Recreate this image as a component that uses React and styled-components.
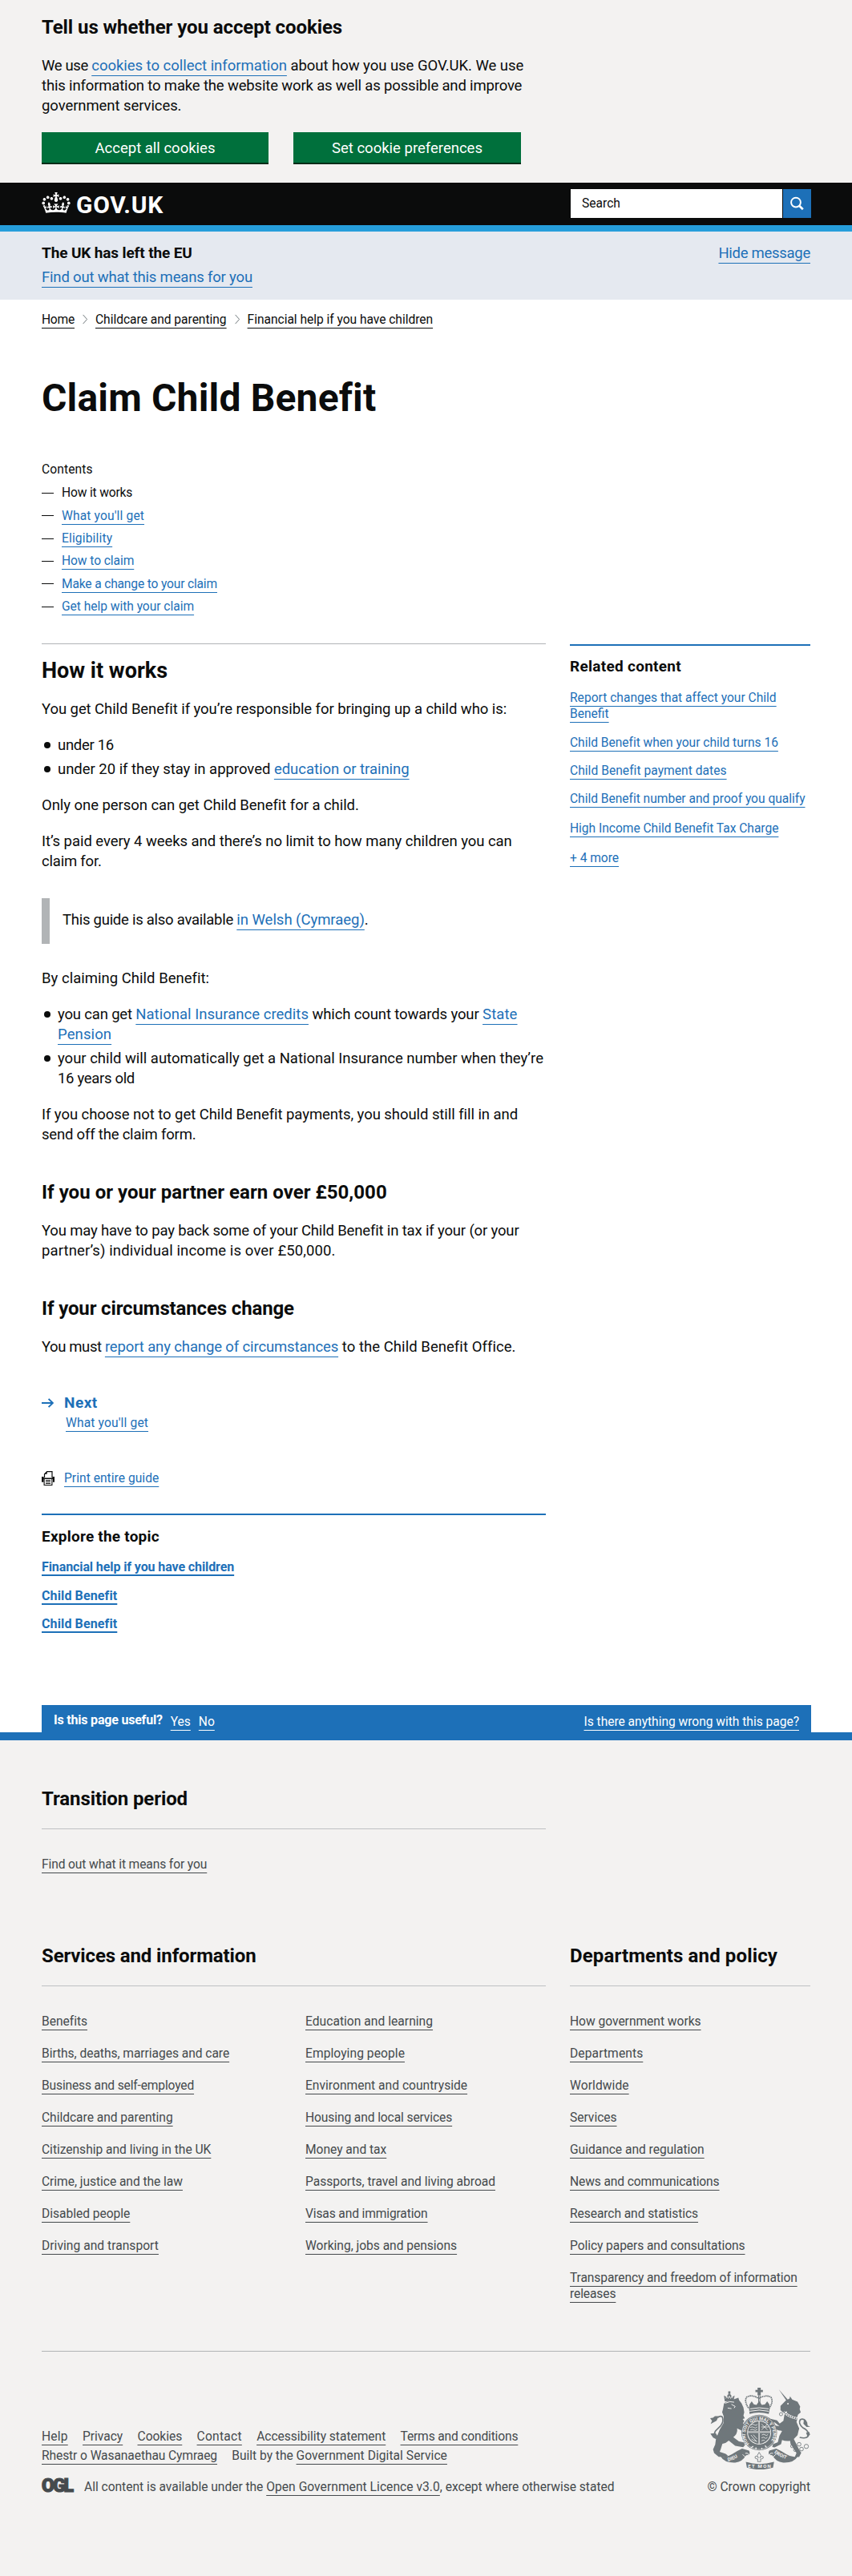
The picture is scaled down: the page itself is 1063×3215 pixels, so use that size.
import React from 'react';
import styled, { createGlobalStyle } from 'styled-components';

const blue = '#1d70b8';
const ink = '#0b0c0c';
const footerInk = '#454a4d';

const Global = createGlobalStyle`
  * { box-sizing: border-box; }
  html { background: #f3f2f1; }
  body { margin: 0; font-family: Roboto, "Liberation Sans", Arial, sans-serif; color: ${ink}; background: #fff; }
  h1, h2, h3, p, ul { margin: 0; padding: 0; }
  ul { list-style: none; }
`;

const Container = styled.div`padding: 0 52px;`;

const Text = styled.p`
  font-size: 18.5px;
  line-height: 25px;
  letter-spacing: ${p => p.$ls ?? -0.03}px;
  margin-top: ${p => p.$mt ?? 20}px;
`;
const Run = styled.span`letter-spacing: ${p => p.$ls}px;`;
const Link = styled.a`
  color: ${blue};
  cursor: pointer;
  letter-spacing: ${p => (p.$ls === undefined ? 'inherit' : `${p.$ls}px`)};
  text-decoration: underline;
  text-decoration-thickness: 1px;
  text-underline-offset: 6px;
  text-decoration-skip-ink: none;
`;
const SmallLink = styled(Link)`
  font-size: 15.6px;
  line-height: 20px;
  letter-spacing: ${p => p.$ls ?? -0.03}px;
  text-underline-offset: 5px;
`;
const Heading = styled.h2`
  font-size: ${p => p.$size ?? 24}px;
  line-height: ${p => p.$lh ?? 30}px;
  font-weight: 700;
  letter-spacing: ${p => p.$ls ?? 0}px;
  margin-top: ${p => p.$mt ?? 0}px;
`;

const CookieBanner = styled.section`background: #f3f2f1; padding: 19px 52px 25px;`;
const CookieText = styled(Text)`width: 614px;`;
const Buttons = styled.div`display: flex; gap: 31px; margin-top: 20px;`;
const Button = styled.button`
  width: ${p => p.$w}px;
  height: 38px;
  border: 0;
  padding: 3px 0 0;
  background: #00703c;
  box-shadow: 0 2px 0 #002d18;
  color: #fff;
  font: 400 18.5px/25px Roboto, "Liberation Sans", sans-serif;
`;

const Header = styled.header`
  display: flex;
  justify-content: space-between;
  height: 61px;
  padding: 8px 51px 0 52px;
  background: ${ink};
  border-bottom: 8px solid #269edb;
`;
const Logo = styled.a`
  display: flex;
  color: #fff;
  font-weight: 700;
  font-size: 30px;
  line-height: 40px;
  letter-spacing: 0.7px;
  svg { width: 36px; height: 26px; margin: 4px 7px 0 0; }
`;
const SearchForm = styled.form`display: flex; gap: 1px; height: 36px;`;
const SearchField = styled.div`
  width: 264px;
  padding: 7px 14px;
  background: #fff;
  font-size: 15.6px;
  line-height: 22px;
`;
const SearchButton = styled.button`
  width: 35px;
  height: 36px;
  border: 0;
  padding: 0;
  background: ${blue};
  svg { display: block; }
`;

const EuBanner = styled.section`
  display: flex;
  justify-content: space-between;
  height: 85px;
  padding: 14px 52px 0;
  background: #e5e9f0;
`;

const Crumbs = styled.nav`display: flex; padding-top: 15px; line-height: 20px;`;
const Crumb = styled(SmallLink)`color: ${ink};`;
const ChevronIcon = styled.svg`width: 8px; height: 13px; margin: 3px 9px 0;`;

const Contents = styled.nav`margin-top: 54px;`;
const SmallText = styled.div`
  font-size: 15.6px;
  line-height: 20px;
  letter-spacing: ${p => p.$ls ?? -0.03}px;
`;
const ContentsList = styled.ul`padding-top: 9.3px;`;
const ContentsItem = styled.li`
  display: flex;
  align-items: center;
  height: 20px;
  margin-bottom: 8.4px;
  font-size: 15.6px;
  letter-spacing: -0.17px;
`;
const Dash = styled.span`width: 15px; height: 1px; margin-right: 10px; background: ${ink};`;

const Columns = styled.div`
  display: grid;
  grid-template-columns: 629px 300px;
  gap: 30px;
  align-items: start;
  margin-top: ${p => p.$mt ?? 0}px;
`;
const Rule = styled.hr`height: 1px; border: 0; margin: 0; background: #b1b4b6;`;
const Bullets = styled.ul`display: grid; gap: 5px; margin-top: 20px;`;
const Bullet = styled.li`
  display: flex;
  font-size: 18.5px;
  line-height: 25px;
  letter-spacing: -0.03px;
  &::before {
    content: '';
    flex: none;
    width: 8px;
    height: 8px;
    margin: 8px 9.5px 0 2.5px;
    border-radius: 50%;
    background: ${ink};
  }
`;
const Inset = styled.div`
  height: 57px;
  margin-top: 33px;
  padding: 15px 0 0 16px;
  border-left: 10px solid #b1b4b6;
`;
const NextRow = styled.div`
  display: flex;
  align-items: center;
  gap: 13px;
  height: 25px;
  margin-top: 44px;
  color: ${blue};
  font-size: 19px;
  font-weight: 700;
  line-height: 25px;
  letter-spacing: 0.5px;
`;
const NextTitle = styled.div`height: 20px; margin: 3px 0 49px; padding-left: 30px; line-height: 20px;`;
const PrintRow = styled.div`
  display: flex;
  align-items: flex-start;
  gap: 12px;
  height: 20px;
  svg { margin-top: 1px; }
`;
const Explore = styled.section`margin-top: 34px; padding-top: 14px; border-top: 2px solid ${blue};`;
const LinkRow = styled.div`margin-top: ${p => p.$mt ?? 16}px; line-height: 20px; font-size: 15.6px;`;
const TopicLink = styled(Link)`
  font-size: 16px;
  font-weight: 700;
  text-decoration-thickness: 2px;
  text-underline-offset: 4px;
`;
const Related = styled.aside`margin-top: 1px; padding-top: 13px; border-top: 2px solid ${blue};`;

const Feedback = styled.section`margin-top: 91px; border-bottom: 10px solid ${blue};`;
const FeedbackBar = styled.div`
  display: flex;
  height: 34px;
  width: 960px;
  margin-left: 52px;
  padding: 11px 15px 0;
  background: ${blue};
  color: #fff;
  line-height: 20px;
`;
const Useful = styled.strong`margin: -2px 10px 0 0; font-size: 16px; letter-spacing: -0.2px;`;
const FeedbackLink = styled(SmallLink)`
  color: #fff;
  margin-right: ${p => p.$mr ?? 0}px;
  margin-left: ${p => (p.$push ? 'auto' : 0)};
`;

const Footer = styled.footer`background: #f3f2f1; padding: 58px 52px 101px; color: ${footerInk};`;
const FooterHeading = styled(Heading)`color: ${ink}; padding-bottom: 22px; border-bottom: 1px solid #bfc1c3;`;
const FooterLists = styled.div`display: grid; grid-template-columns: 329px 300px;`;
const FooterList = styled.ul`
  display: grid;
  gap: 20px;
  align-content: start;
  margin-top: 34px;
  line-height: 20px;
  font-size: 15.6px;
`;
const FooterLink = styled(SmallLink)`color: ${footerInk};`;
const Meta = styled.div`
  display: flex;
  justify-content: space-between;
  align-items: flex-end;
  margin-top: 61px;
  padding-top: 45px;
  border-top: 1px solid #b1b4b6;
`;
const MetaLinks = styled.div`
  display: flex;
  gap: 18.3px;
  margin-bottom: ${p => p.$mb ?? 4}px;
  line-height: 20px;
  font-size: 15.6px;
`;
const Licence = styled.div`display: flex; gap: 12px;`;
const Ogl = styled.span`
  width: 41px;
  height: 20px;
  margin-top: -1px;
  font-size: 23px;
  font-weight: 900;
  line-height: 20px;
  letter-spacing: -2px;
  white-space: nowrap;
  -webkit-text-stroke: 1.2px ${footerInk};
`;
const Copyright = styled.div`display: flex; flex-direction: column; align-items: flex-end; gap: 12px;`;

const Crown = () => (
  <svg viewBox="0 0 132 97" fill="currentColor">
    <path fillRule="evenodd" d="M25 30.2c3.5 1.5 7.7-.2 9.1-3.7 1.5-3.6-.2-7.8-3.9-9.2-3.6-1.4-7.6.3-9.1 3.9-1.4 3.5.3 7.5 3.9 9zM9 39.5c3.6 1.5 7.8-.2 9.2-3.7 1.5-3.6-.2-7.8-3.9-9.1-3.6-1.5-7.6.2-9.1 3.8-1.4 3.5.3 7.5 3.8 9zM4.4 57.2c3.5 1.5 7.7-.2 9.1-3.8 1.5-3.6-.2-7.7-3.9-9.1-3.5-1.5-7.6.3-9.1 3.8-1.4 3.5.3 7.6 3.9 9.1zm38.3-21.4c3.5 1.5 7.7-.2 9.1-3.8 1.5-3.6-.2-7.7-3.9-9.1-3.6-1.5-7.6.3-9.1 3.8-1.3 3.6.4 7.7 3.9 9.1zm64.4-5.6c-3.6 1.5-7.8-.2-9.1-3.7-1.5-3.6.2-7.8 3.8-9.2 3.6-1.4 7.7.3 9.2 3.9 1.3 3.5-.4 7.5-3.9 9zm15.9 9.3c-3.6 1.5-7.7-.2-9.1-3.7-1.5-3.6.2-7.8 3.7-9.1 3.6-1.5 7.7.2 9.2 3.8 1.5 3.5-.3 7.5-3.8 9zm4.7 17.7c-3.6 1.5-7.8-.2-9.2-3.8-1.5-3.6.2-7.7 3.9-9.1 3.6-1.5 7.7.3 9.2 3.8 1.3 3.5-.4 7.6-3.9 9.1zM89.3 35.8c-3.6 1.5-7.8-.2-9.2-3.8-1.4-3.6.2-7.7 3.9-9.1 3.6-1.5 7.7.3 9.2 3.8 1.4 3.6-.3 7.7-3.9 9.1zM69.7 17.7l8.9 4.7V9.3l-8.9 2.8c-.2-.3-.5-.6-.9-.9L72.4 0H59.6l3.5 11.2c-.3.3-.6.5-.9.9l-8.8-2.8v13.1l8.8-4.7c.3.3.6.7.9.9l-5 15.4v.1c-.2.8-.4 1.6-.4 2.4 0 4.1 3.1 7.5 7 8.1h.2c.3 0 .7.1 1 .1.4 0 .7 0 1-.1h.2c4-.6 7.1-4.1 7.1-8.1 0-.8-.1-1.7-.4-2.4V34l-5.1-15.4c.4-.2.7-.6 1-.9zM66 92.8c16.9 0 32.8 1.1 47.1 3.2 4-16.9 8.9-26.7 14-33.5l-9.6-3.4c1 4.9 1.1 7.2 0 10.2-1.5-1.4-3-4.3-4.2-8.7L108.6 76c2.8-2 5-3.2 7.5-3.3-4.4 9.4-10 11.9-13.6 11.2-4.3-.8-6.3-4.6-5.6-7.9 1-4.7 5.7-5.9 8-.5 4.3-8.7-3-11.4-7.6-8.8 7.1-7.2 7.9-13.5 2.1-21.1-8 6.1-8.1 12.3-4.5 20.8-4.7-5.4-12.1-2.5-9.5 6.2 3.4-5.2 7.9-2 7.2 3.1-.6 4.3-6.4 7.8-13.5 7.2-10.3-.9-10.9-8-11.2-13.8 2.5-.5 7.1 1.8 11 7.3L80.2 60c-4.1 4.4-8 5.3-12.3 5.4 1.4-4.4 8-11.6 8-11.6H55.5s6.4 7.2 7.9 11.6c-4.2-.1-8-1-12.3-5.4l1.4 16.4c3.9-5.5 8.5-7.7 10.9-7.3-.3 5.8-.9 12.8-11.1 13.8-7.2.6-12.9-2.9-13.5-7.2-.7-5 3.8-8.3 7.1-3.1 2.7-8.7-4.6-11.6-9.4-6.2 3.7-8.5 3.6-14.7-4.6-20.8-5.8 7.6-5 13.9 2.2 21.1-4.7-2.6-11.9.1-7.7 8.8 2.3-5.5 7.1-4.2 8.1.5.7 3.3-1.3 7.1-5.7 7.9-3.5.7-9-1.8-13.5-11.2 2.5.1 4.7 1.3 7.5 3.3l-4.7-15.4c-1.2 4.4-2.7 7.2-4.3 8.7-1.1-3-.9-5.3 0-10.2l-9.5 3.4c5 6.9 9.9 16.7 14 33.5 14.8-2.1 30.8-3.2 47.7-3.2z" />
  </svg>
);

const SearchIcon = () => (
  <svg width="35" height="36" fill="none" stroke="#fff">
    <circle cx="16" cy="16.6" r="5.9" strokeWidth="1.9" />
    <path d="M20.4 21l4.4 4.2" strokeWidth="2.7" />
  </svg>
);

const Chevron = () => (
  <ChevronIcon viewBox="0 0 8 13" fill="none" stroke="#6f777b">
    <path d="M1.6.9l5 5.6-5 5.6" />
  </ChevronIcon>
);

const ArrowIcon = () => (
  <svg width="15" height="12" fill="none" stroke={blue} strokeWidth="1.9">
    <path d="M0 6h13.6M8.6.9L13.8 6l-5.2 5.1" />
  </svg>
);

const PrintIcon = () => (
  <svg width="16" height="18">
    <path d="M3.5 8V3.8L6.7.6h6.3V8" fill="#fff" stroke={ink} strokeWidth="1.2" />
    <path d="M3.5 3.8h3.2V.6z" fill={ink} />
    <path d="M0 7h2.6v1.5h10.8V7H16v6.7h-2V10H2.5v3.7H0z" fill={ink} />
    <path d="M3.1 9.5h9.8v8H3.1z" fill="#fff" stroke={ink} strokeWidth="1.1" />
    <path d="M5 11.5h6M5 13.5h6M5 15.5h6" stroke={ink} />
  </svg>
);

const crestInk = '#6f777b';
const paper = '#f3f2f1';
const Crest = () => (
  <svg width="125" height="102" viewBox="140 90 376 306" fill={crestInk}>
    <defs>
      <path id="garter" d="M287 300A52 52 0 1 1 361 300" />
      <path id="mottoLeft" d="M208 366Q234 360 266 335" />
      <path id="mottoRight" d="M380 333Q404 354 448 364" />
    </defs>
    {/* lion */}
    <path d="M195 141l-3-22 10 6 4-9 6-3 6 3 4 9 10-6-4 20q-16 0-33 2zM208 103h8v10h-8z" />
    <path d="M199 130l4-8 5 8 4-9 5 9 5-9 3 8" fill="none" stroke={paper} strokeWidth="2.5" />
    <path d="M192 149l6-5 48-17 3 10 9 11 7 16 3 18-3 12 5 11-8 2 6 8-5 8 14 16 2 18-8 8-10-13-20-10q4 20-14 33l21 16 19 4 4 10-7 8-30-5-24-20q-10 10-24 12l-6 20-4 10 22 8 8 6-4 6-30-1-17-14-4-14 8-18 3-22 14-34 14-24 1-26-6-16 3-10z" />
    <path d="M196 148l18-6 16 2M220 152l14 8-4 6M206 166l14 2" fill="none" stroke={paper} strokeWidth="3" />
    <path d="M168 276q-18-10-8-24 10-10 20-20 12-16 6-32-8-8-18 2" fill="none" stroke={crestInk} strokeWidth="5" />
    <path d="M172 196l-8 18-22 12 5-12-7-10q12 0 18-8zM141 262l20-2 12 20-12 2-10-5z" />
    {/* unicorn */}
    <path d="M398 96l35 40-5 5z" />
    <path d="M404 158l20-20 14-8 2-8 8 12 20 8 10 18-2 10 4 12-10 8-4 12-40-10 3-14-16 4-9-8z" />
    <circle cx="432" cy="150" r="3" fill={paper} />
    <path d="M420 184q20 16 48 20l-4 14 10 24-6 26-14 14 20 40 8 12-8 16-16-1 6-14-22-34-2-12q-18 2-30-3l-4 16-24 12-9-2 3-10 18-8 6-24 10-18-24-6-16-14-2-12 8-2 8 14 16 2-18-14-20 1-9-9 16-5 22 5 10 12 14-10z" />
    <path d="M416 181q24 20 50 24" fill="none" stroke={paper} strokeWidth="9" />
    <path d="M416 181q24 20 50 24" fill="none" stroke={crestInk} strokeWidth="5" strokeDasharray="5 3" />
    <path d="M476 276q32 8 34-12-4-16-22-24-18-16-10-30 12-8 22 6" fill="none" stroke={crestInk} strokeWidth="5" />
    <path d="M492 210l12 8 2 14 10 4-14 1-12-12zM500 258l12-2 3 10-10 6z" />
    <g fill="none" stroke={crestInk} strokeWidth="2.6">
      <circle cx="406" cy="189" r="6" /><circle cx="399" cy="243" r="6" /><circle cx="467" cy="244" r="5" />
      <circle cx="448" cy="309" r="6" /><circle cx="459" cy="323" r="6" /><circle cx="483" cy="320" r="7" />
      <circle cx="501" cy="310" r="8" /><circle cx="474" cy="302" r="7" />
    </g>
    {/* crown */}
    <path d="M318 89h12v9h8v8h-8v12h-12v-12h-8v-8h8z" />
    <path d="M284 166q-18-28-6-42 20-10 44 6 28-16 46-5 11 16-6 41" fill="none" stroke={crestInk} strokeWidth="5" strokeDasharray="5 2" />
    <path d="M322 118v46M327 118v46" stroke={crestInk} strokeWidth="3" />
    <path d="M286 166l2-14 8-11 8 11 10 2 10-15 10 15 12-2 8-11 8 11 2 14-4 22q-38-10-72 0z" />
    <path d="M290 169q34-8 70 0M288 178q36-9 72 0" fill="none" stroke={paper} strokeWidth="3" />
    {/* garter and shield */}
    <circle cx="324" cy="258" r="67" />
    <circle cx="324" cy="258" r="63.5" fill="none" stroke={paper} strokeWidth="1.8" />
    <circle cx="324" cy="258" r="45" fill={paper} />
    <circle cx="324" cy="258" r="42" />
    <path d="M324 214v88M280 256h88" stroke={paper} strokeWidth="5" />
    <path d="M324 214v88M280 256h88" stroke={crestInk} strokeWidth="1.5" />
    <path d="M293 229q8-5 13 0t12-2M290 239q8-5 14 0t13-2M291 248q8-4 13 0t13-2M333 226l22 22M355 226l-22 22M332 237h28M334 267q8-5 13 0t10-2M333 278q8-5 12 0t10-2M333 289q6-4 12-1M293 267l22 26M302 266l14 16M295 282q8 8 20 8" fill="none" stroke={paper} strokeWidth="2.4" />
    <text fill={paper} fontSize="17" fontWeight="700" letterSpacing="0.2"><textPath href="#garter">HONI SOIT QUI MAL Y PENSE</textPath></text>
    <path d="M292 316l10-7M312 322v-8M334 322v-7M352 314l-6-7" stroke={paper} strokeWidth="4" />
    {/* ribbon */}
    <path d="M178 346q20 8 44-7 22-14 38-21l26 8q6 10-2 17-8-2-12 4-10 20-38 24-40 2-56-25zM274 368q50 16 106 0l-4 22q-48 14-98 0zM470 346q-20 8-44-7-22-14-38-21l-26 8q-6 10 2 17 8-2 12 4 10 20 38 24 40 2 56-25z" />
    <path d="M262 340q14 8 16 28M386 340q-14 8-16 28M272 336q16-4 12 14M376 336q-16-4-12 14" fill="none" stroke={paper} strokeWidth="3" />
    <path d="M324 332l7 12-4 9q6-10 12-5 3 8-6 9h-4l1 10h-12l1-10h-4q-9-1-6-9 6-5 12 5l-4-9z" fill={paper} stroke={crestInk} strokeWidth="2.5" />
    <g fill={paper} fontSize="18" fontWeight="700">
      <text><textPath href="#mottoLeft">DIEU</textPath></text>
      <text x="325" y="390" textAnchor="middle" textLength="86">ET MON</text>
      <text><textPath href="#mottoRight">DROIT</textPath></text>
    </g>
  </svg>
);

const contents = [
  ["What you'll get", 0.14], ['Eligibility', 0.14], ['How to claim', -0.08],
  ['Make a change to your claim', -0.17], ['Get help with your claim', -0.04],
];
const services = [
  ['Benefits'], ['Births, deaths, marriages and care', -0.05], ['Business and self-employed', -0.16],
  ['Childcare and parenting'], ['Citizenship and living in the UK'], ['Crime, justice and the law', -0.05],
  ['Disabled people'], ['Driving and transport', 0.03],
];
const moreServices = [
  ['Education and learning', 0.03], ['Employing people', 0.06], ['Environment and countryside', 0.01],
  ['Housing and local services', -0.11], ['Money and tax'], ['Passports, travel and living abroad'],
  ['Visas and immigration', -0.14], ['Working, jobs and pensions'],
];
const departments = [
  ['How government works'], ['Departments', 0.1], ['Worldwide', 0.08], ['Services'],
  ['Guidance and regulation'], ['News and communications', -0.12], ['Research and statistics', -0.08],
  ['Policy papers and consultations', -0.08], ['Transparency and freedom of information releases', -0.12],
];
const related = [
  ['Report changes that affect your Child Benefit', 17, 0], ['Child Benefit when your child turns 16', 16],
  ['Child Benefit payment dates', 15, 0.03], ['Child Benefit number and proof you qualify', 15],
  ['High Income Child Benefit Tax Charge', 17], ['+ 4 more', 17],
];

const LinkList = ({ items }) => (
  <FooterList>
    {items.map(([label, ls]) => <li key={label}><FooterLink $ls={ls}>{label}</FooterLink></li>)}
  </FooterList>
);

export default function App() {
  return (
    <>
      <Global />
      <CookieBanner>
        <Heading $ls={-0.08}>Tell us whether you accept cookies</Heading>
        <CookieText $mt={21}>
          <Run $ls={-0.35}>We use </Run><Link>cookies to collect information</Link><Run $ls={-0.04}> about how you use GOV.UK. We use </Run>
          <Run $ls={-0.16}>this information to make the website work as well as possible and improve </Run>
          <Run $ls={-0.08}>government services.</Run>
        </CookieText>
        <Buttons>
          <Button $w={283}>Accept all cookies</Button>
          <Button $w={284}>Set cookie preferences</Button>
        </Buttons>
      </CookieBanner>
      <Header>
        <Logo><Crown />GOV.UK</Logo>
        <SearchForm>
          <SearchField>Search</SearchField>
          <SearchButton type="button" aria-label="Search"><SearchIcon /></SearchButton>
        </SearchForm>
      </Header>
      <EuBanner>
        <div>
          <Heading $size={19} $lh={25} $ls={-0.13}>The UK has left the EU</Heading>
          <Text $mt={6}><Link $ls={-0.18}>Find out what this means for you</Link></Text>
        </div>
        <Text $mt={1}><Link $ls={-0.28}>Hide message</Link></Text>
      </EuBanner>
      <Container>
        <Crumbs>
          <Crumb $ls={-0.25}>Home</Crumb><Chevron />
          <Crumb>Childcare and parenting</Crumb><Chevron />
          <Crumb $ls={-0.04}>Financial help if you have children</Crumb>
        </Crumbs>
        <Heading as="h1" $size={48} $lh={50} $mt={63} $ls={0.17}>Claim Child Benefit</Heading>
        <Contents>
          <SmallText $ls={0.1}>Contents</SmallText>
          <ContentsList>
            <ContentsItem><Dash />How it works</ContentsItem>
            {contents.map(([label, ls]) => (
              <ContentsItem key={label}><Dash /><SmallLink $ls={ls}>{label}</SmallLink></ContentsItem>
            ))}
          </ContentsList>
        </Contents>
        <Columns $mt={35.8}>
          <main>
            <Rule />
            <Heading $size={27} $mt={18}>How it works</Heading>
            <Text $mt={21} $ls={-0.075}>You get Child Benefit if you’re responsible for bringing up a child who is:</Text>
            <Bullets>
              <Bullet><Run $ls={-0.3}>under 16</Run></Bullet>
              <Bullet><span>under 20 if they stay in approved <Link>education or training</Link></span></Bullet>
            </Bullets>
            <Text $ls={-0.055}>Only one person can get Child Benefit for a child.</Text>
            <Text $ls={-0.06}>It’s paid every 4 weeks and there’s no limit to how many children you can <Run $ls={-0.2}>claim for.</Run></Text>
            <Inset>
              <Text $mt={0}><Run $ls={-0.26}>This guide is also available </Run><Link>in Welsh (Cymraeg)</Link>.</Text>
            </Inset>
            <Text $mt={31} $ls={0.02}>By claiming Child Benefit:</Text>
            <Bullets>
              <Bullet><span><Run $ls={-0.17}>you can get </Run><Link $ls={0.02}>National Insurance credits</Link><Run $ls={-0.12}> which count towards your </Run><Link $ls={0.1}>State Pension</Link></span></Bullet>
              <Bullet><span><Run $ls={-0.015}>your child will automatically get a National Insurance number when they’re </Run><Run $ls={-0.32}>16 years old</Run></span></Bullet>
            </Bullets>
            <Text $ls={-0.06}>If you choose not to get Child Benefit payments, you should still fill in and <Run $ls={-0.2}>send off the claim form.</Run></Text>
            <Heading $mt={44} $ls={0.03}>If you or your partner earn over £50,000</Heading>
            <Text $mt={21} $ls={-0.16}>You may have to pay back some of your Child Benefit in tax if your (or your <Run $ls={0.12}>partner’s) individual income is over £50,000.</Run></Text>
            <Heading $mt={44} $ls={-0.14}>If your circumstances change</Heading>
            <Text $mt={21}><Run $ls={-0.4}>You must </Run><Link $ls={-0.13}>report any change of circumstances</Link><Run $ls={0.05}> to the Child Benefit Office.</Run></Text>
            <NextRow><ArrowIcon />Next</NextRow>
            <NextTitle><SmallLink $ls={0.14}>What you'll get</SmallLink></NextTitle>
            <PrintRow><PrintIcon /><SmallLink $ls={0.03}>Print entire guide</SmallLink></PrintRow>
            <Explore>
              <Heading $size={19} $lh={25} $ls={0.22}>Explore the topic</Heading>
              <LinkRow><TopicLink $ls={-0.1}>Financial help if you have children</TopicLink></LinkRow>
              <LinkRow><TopicLink $ls={0.12}>Child Benefit</TopicLink></LinkRow>
              <LinkRow $mt={15}><TopicLink $ls={0.12}>Child Benefit</TopicLink></LinkRow>
            </Explore>
          </main>
          <Related>
            <Heading $size={19} $lh={25} $ls={0.28}>Related content</Heading>
            {related.map(([label, mt, ls]) => (
              <LinkRow key={label} $mt={mt}><SmallLink $ls={ls}>{label}</SmallLink></LinkRow>
            ))}
          </Related>
        </Columns>
      </Container>
      <Feedback>
        <FeedbackBar>
          <Useful>Is this page useful?</Useful>
          <FeedbackLink $mr={10}>Yes</FeedbackLink>
          <FeedbackLink>No</FeedbackLink>
          <FeedbackLink $push>Is there anything wrong with this page?</FeedbackLink>
        </FeedbackBar>
      </Feedback>
      <Footer>
        <Columns>
          <div>
            <FooterHeading $ls={-0.09}>Transition period</FooterHeading>
            <LinkList items={[['Find out what it means for you', -0.12]]} />
          </div>
        </Columns>
        <Columns $mt={89}>
          <div>
            <FooterHeading $ls={-0.13}>Services and information</FooterHeading>
            <FooterLists><LinkList items={services} /><LinkList items={moreServices} /></FooterLists>
          </div>
          <div>
            <FooterHeading $ls={0.13}>Departments and policy</FooterHeading>
            <LinkList items={departments} />
          </div>
        </Columns>
        <Meta>
          <div>
            <MetaLinks>
              <FooterLink $ls={0.2}>Help</FooterLink>
              <FooterLink>Privacy</FooterLink>
              <FooterLink>Cookies</FooterLink>
              <FooterLink $ls={0.25}>Contact</FooterLink>
              <FooterLink>Accessibility statement</FooterLink>
              <FooterLink $ls={-0.17}>Terms and conditions</FooterLink>
            </MetaLinks>
            <MetaLinks $mb={19}>
              <FooterLink $ls={-0.1}>Rhestr o Wasanaethau Cymraeg</FooterLink>
              <SmallText>Built by the <FooterLink $ls={0.05}>Government Digital Service</FooterLink></SmallText>
            </MetaLinks>
            <Licence>
              <Ogl>OGL</Ogl>
              <SmallText>All content is available under the <FooterLink $ls={0.04}>Open Government Licence v3.0</FooterLink>, except where otherwise stated</SmallText>
            </Licence>
          </div>
          <Copyright><Crest /><SmallText>© Crown copyright</SmallText></Copyright>
        </Meta>
      </Footer>
    </>
  );
}
